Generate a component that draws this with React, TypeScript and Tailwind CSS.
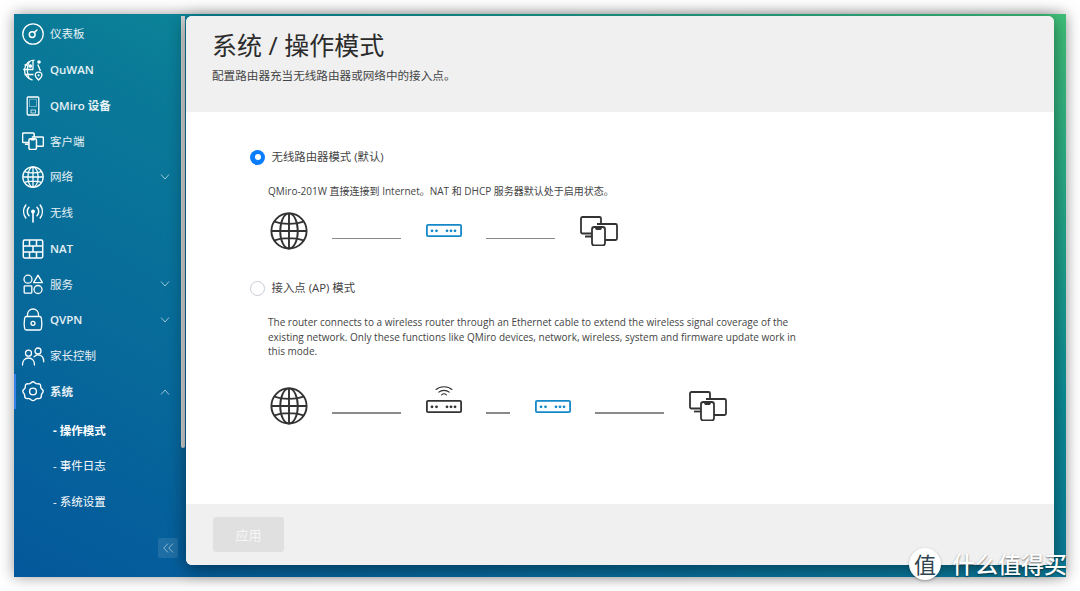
import React from "react";

const cjk = "font-['Open_Sans','Noto_Sans_CJK_SC',sans-serif]";

type IconProps = { className?: string };

const DashboardIcon = () => (
  <svg width="24" height="24" viewBox="0 0 24 24" fill="none" stroke="white" strokeWidth="1.3">
    <circle cx="12" cy="12" r="10.2" />
    <circle cx="11.2" cy="12.6" r="2.9" strokeWidth="1.5" />
    <path d="M13.4 10.4 16 8" strokeWidth="1.5" strokeLinecap="round" />
  </svg>
);

const QuwanIcon = () => (
  <svg width="24" height="24" viewBox="0 0 24 24" fill="none" stroke="white" strokeWidth="1.3">
    <path d="M13.5 2.2A10 10 0 0 0 11.5 22" />
    <path d="M8.5 3.2C5.6 8 5.6 16 8.5 21" />
    <path d="M2.2 11.5h10M3.5 7h3M3.5 16.5h9" />
    <path d="M12 2.4v9.1" />
    <circle cx="9.3" cy="8" r="1.2" fill="white" />
    <circle cx="18" cy="4" r="1.8" fill="white" stroke="none" />
    <path d="M16.8 6.5 19.5 13" />
    <path d="M17.6 14.2c-2 0-3.3 1.4-3.3 3 0 1.8 3.3 4.8 3.3 4.8s3.3-3 3.3-4.8c0-1.6-1.3-3-3.3-3Z" />
    <circle cx="17.6" cy="17.2" r="1" fill="white" stroke="none" />
  </svg>
);

const QmiroIcon = () => (
  <svg width="24" height="24" viewBox="0 0 24 24" fill="none" stroke="white" strokeWidth="1.3">
    <rect x="6.2" y="3" width="11.6" height="18" rx="1" />
    <path d="M8.5 5.2h7v7.3h-7z" strokeWidth="0.5" strokeOpacity="0.8" />
    <rect x="10" y="16" width="4.6" height="3" strokeWidth="0.7" />
  </svg>
);

const DevicesIcon = ({ className = "", color = "white", w = 1.8 }: IconProps & { color?: string; w?: number }) => (
  <svg className={className} viewBox="0 0 38 30" fill="none" stroke={color} strokeWidth={w} strokeLinejoin="round">
    <path d="M12 17.5H2.5A1.5 1.5 0 0 1 1 16V2.5A1.5 1.5 0 0 1 2.5 1h17A1.5 1.5 0 0 1 21 2.5V8" />
    <path d="M5 20.5h7" />
    <path d="M17 8h18.5A1.5 1.5 0 0 1 37 9.5v13a1.5 1.5 0 0 1-1.5 1.5H25" />
    <rect x="12" y="11" width="13" height="18.5" rx="2.4" />
    <path d="M15.5 11l1 2h4l1-2" />
  </svg>
);

const GlobeIcon = ({ className = "", color = "white", w = 1.9 }: IconProps & { color?: string; w?: number }) => (
  <svg className={className} viewBox="0 0 38 38" fill="none" stroke={color} strokeWidth={w}>
    <circle cx="19" cy="19" r="17.6" />
    <ellipse cx="19" cy="19" rx="8.8" ry="17.6" />
    <path d="M19 1.4v35.2M1.4 19h35.2M4.4 9.6c8 3 21 3 29.2 0M4.4 28.4c8-3 21-3 29.2 0" />
  </svg>
);

const WirelessIcon = () => (
  <svg width="24" height="24" viewBox="0 0 24 24" fill="none" stroke="white" strokeWidth="1.5" strokeLinecap="round">
    <path d="M12 11v10" strokeWidth="1.6" />
    <circle cx="12" cy="10.5" r="1.9" fill="white" stroke="none" />
    <path d="M8 6.3a6 6 0 0 0 0 8.4M16 6.3a6 6 0 0 1 0 8.4" />
    <path d="M4.8 4a11 11 0 0 0 0 13M19.2 4a11 11 0 0 1 0 13" />
  </svg>
);

const NatIcon = () => (
  <svg width="24" height="24" viewBox="0 0 24 24" fill="none" stroke="white" strokeWidth="1.5">
    <rect x="2.3" y="3" width="19.4" height="18" rx="1.4" />
    <path d="M2.3 9h19.4M2.3 15h19.4M8.5 3v6M15.5 3v6M12 9v6M8.5 15v6M15.5 15v6" />
  </svg>
);

const ServicesIcon = () => (
  <svg width="24" height="24" viewBox="0 0 24 24" fill="none" stroke="white" strokeWidth="1.3" strokeLinejoin="round">
    <circle cx="7" cy="7.2" r="4" />
    <path d="M17 3.2l4.4 7.4h-8.8z" />
    <rect x="3.2" y="13.8" width="7.6" height="7.4" rx="0.8" />
    <circle cx="17" cy="17.5" r="4" />
  </svg>
);

const LockIcon = () => (
  <svg width="24" height="24" viewBox="0 0 24 24" fill="none" stroke="white" strokeWidth="1.3">
    <path d="M6.5 8.5V6.5a5.5 5.5 0 0 1 11 0v2" />
    <path d="M5.5 8.5h13c1 0 1.7.9 1.9 1.8.5 3.2.5 7.2 0 10-.2.9-1 1.7-1.9 1.7h-13c-1 0-1.7-.8-1.9-1.7-.5-2.8-.5-6.8 0-10 .2-.9.9-1.8 1.9-1.8Z" />
    <circle cx="12" cy="15.3" r="2" />
  </svg>
);

const ParentalIcon = () => (
  <svg width="24" height="24" viewBox="0 0 24 24" fill="none" stroke="white" strokeWidth="1.3" strokeLinecap="round">
    <circle cx="7.5" cy="9.2" r="3" />
    <circle cx="17" cy="7" r="3" />
    <path d="M1.5 21c0-4 2.4-7 6-7s6 3 6 7" />
    <path d="M13 12.8c1-1.2 2.4-2 4-2 3.5 0 5.7 2.8 5.7 7" />
  </svg>
);

const GearIcon = () => (
  <svg width="24" height="24" viewBox="0 0 24 24" fill="none" stroke="white" strokeWidth="1.4" strokeLinejoin="round">
    <path d="M12 1.8c1.4 0 2 1.5 3.2 1.9 1.3.4 2.8-.3 3.8.6s.5 2.5 1 3.7c.5 1.2 2 1.8 2.2 3.1.1 1.3-1.3 2.1-1.7 3.3-.4 1.2.1 2.8-.9 3.7-1 .9-2.5.2-3.8.6-1.3.4-2.1 1.9-3.8 1.9s-2.5-1.5-3.8-1.9c-1.3-.4-2.8.3-3.8-.6-1-.9-.5-2.5-.9-3.7-.4-1.2-1.8-2-1.7-3.3.2-1.3 1.7-1.9 2.2-3.1.5-1.2 0-2.8 1-3.7s2.5-.2 3.8-.6C10 3.3 10.6 1.8 12 1.8Z" />
    <circle cx="12" cy="11.5" r="3.4" />
  </svg>
);

const Chevron = ({ up = false }: { up?: boolean }) => (
  <svg width="10" height="6" viewBox="0 0 10 6" fill="none" stroke="white" strokeOpacity="0.6" strokeWidth="1">
    <path d={up ? "M1 5.5 5 1l4 4.5" : "M1 .5 5 5l4-4.5"} />
  </svg>
);

const RouterBox = ({ color, className = "" }: { color: string; className?: string }) => (
  <svg className={className} width="36" height="13" viewBox="0 0 36 13" fill="none">
    <rect x="0.9" y="0.9" width="34.2" height="11.2" rx="1.2" stroke={color} strokeWidth="1.8" />
    <g fill={color}>
      <circle cx="6" cy="6.8" r="1.4" />
      <circle cx="10.5" cy="6.8" r="1.4" />
      <circle cx="21" cy="6.8" r="1.4" />
      <circle cx="25" cy="6.8" r="1.4" />
      <circle cx="29" cy="6.8" r="1.4" />
    </g>
  </svg>
);

const Line = ({ w }: { w: string }) => <div className={`${w} mb-[11px] h-[1.5px] bg-[#8a8a8a]`} />;

const Radio = ({ checked = false }: { checked?: boolean }) =>
  checked ? (
    <span className="flex h-[15px] w-[15px] items-center justify-center rounded-full bg-[#0a7dff]">
      <span className="h-[6px] w-[6px] rounded-full bg-white" />
    </span>
  ) : (
    <span className="h-[15px] w-[15px] rounded-full border border-[#c8ccd4] bg-white" />
  );

const navItems: { label: string; icon: React.ReactNode; bold?: boolean; chevron?: "up" | "down"; active?: boolean }[] = [
  { label: "仪表板", icon: <DashboardIcon /> },
  { label: "QuWAN", icon: <QuwanIcon />, bold: true },
  { label: "QMiro 设备", icon: <QmiroIcon />, bold: true },
  { label: "客户端", icon: <DevicesIcon className="h-[18px] w-[22px]" w={2.6} /> },
  { label: "网络", icon: <GlobeIcon className="h-[22px] w-[22px]" w={2.2} />, chevron: "down" },
  { label: "无线", icon: <WirelessIcon /> },
  { label: "NAT", icon: <NatIcon />, bold: true },
  { label: "服务", icon: <ServicesIcon />, chevron: "down" },
  { label: "QVPN", icon: <LockIcon />, bold: true, chevron: "down" },
  { label: "家长控制", icon: <ParentalIcon /> },
  { label: "系统", icon: <GearIcon />, bold: true, chevron: "up", active: true },
];

const subItems = [
  { label: "- 操作模式", bold: true },
  { label: "- 事件日志" },
  { label: "- 系统设置" },
];

export default function App() {
  return (
    <div className={`${cjk} relative h-[591px] w-[1080px] overflow-hidden bg-white p-[14px]`}>
      <div className="flex h-[563px] w-[1052px] bg-[linear-gradient(to_bottom_left,#3fbf78_0%,#0c8c95_34%,#0a7a98_50%,#04589c_100%)] shadow-[0_0_14px_rgba(0,0,0,0.4)]">
        <aside className="flex w-[167px] flex-col pt-[2.2px]">
          {navItems.map((item) => (
            <div
              key={item.label}
              className={`flex h-[35.75px] items-center border-l-[2px] pr-[11px] pl-[4px] ${
                item.active ? "border-[#3b82e6]" : "border-transparent"
              }`}
            >
              <div className="flex w-[26px] justify-center">{item.icon}</div>
              <span className={`ml-[4px] flex-1 text-[11.5px] text-white/90 ${item.bold ? "font-semibold text-white" : ""}`}>
                {item.label}
              </span>
              {item.chevron && <Chevron up={item.chevron === "up"} />}
            </div>
          ))}
          <div className="mt-[3px] flex flex-col">
            {subItems.map((item) => (
              <div
                key={item.label}
                className={`flex h-[35.75px] items-center pl-[39px] text-[11.5px] text-white ${item.bold ? "font-bold" : ""}`}
              >
                {item.label}
              </div>
            ))}
          </div>
          <div className="mt-auto mr-[3px] mb-[19px] flex h-[20px] w-[20px] items-center justify-center self-end rounded-[2px] bg-white/10 text-white/50">
            <svg width="11" height="10" viewBox="0 0 11 10" fill="none" stroke="currentColor" strokeWidth="1">
              <path d="M5 .5.8 5 5 9.5M10 .5 5.8 5 10 9.5" />
            </svg>
          </div>
        </aside>

        <div className="mt-[2px] h-[432px] w-[4px] rounded-b-[2px] bg-[#d4d4d4]" />

        <main className="mt-[2px] ml-px flex h-[549px] w-[868px] flex-col overflow-hidden rounded-[6px] bg-white shadow-[0_4px_18px_rgba(0,0,0,0.45)]">
          <header className="h-[96px] bg-[#f0f0f0] pt-[13px] pl-[26px]">
            <h1 className="text-[25px] leading-[32px] font-normal text-[#2b2b2b]">系统 / 操作模式</h1>
            <p className="mt-[7px] text-[11.6px] leading-[16px] text-[#444]">配置路由器充当无线路由器或网络中的接入点。</p>
          </header>

          <section className="flex-1 pt-[36px] pl-[64px] text-[#444]">
            <label className="flex h-[18px] items-center gap-[6.5px] text-[11.4px]">
              <Radio checked />
              无线路由器模式 (默认)
            </label>
            <p className="mt-[17px] ml-[18px] text-[10px] leading-[16px]">
              QMiro-201W 直接连接到 Internet。NAT 和 DHCP 服务器默认处于启用状态。
            </p>
            <div className="mt-[13px] ml-[19.5px] flex h-[38px] items-end gap-[24.5px]">
              <GlobeIcon className="h-[38px] w-[38px]" color="#333" />
              <Line w="w-[69px]" />
              <RouterBox color="#1588c8" className="mb-[13px]" />
              <Line w="w-[69px]" />
              <DevicesIcon className="mb-[4px] h-[30px] w-[38px]" color="#333" />
            </div>

            <label className="mt-[29px] flex h-[18px] items-center gap-[6.5px] text-[11.4px]">
              <Radio />
              接入点 (AP) 模式
            </label>
            <p className="mt-[18px] ml-[18px] w-[540px] text-[10px] leading-[14.6px]">
              The router connects to a wireless router through an Ethernet cable to extend the wireless signal coverage of the
              existing network. Only these functions like QMiro devices, network, wireless, system and firmware update work in
              this mode.
            </p>
            <div className="mt-[28.2px] ml-[19.5px] flex h-[38px] items-end gap-[24.5px]">
              <GlobeIcon className="h-[38px] w-[38px]" color="#333" />
              <Line w="w-[69px]" />
              <div className="mb-[12px] flex flex-col items-center">
                <svg width="18" height="14" viewBox="0 0 18 14" fill="none" stroke="#333" strokeWidth="1.1" strokeLinecap="round">
                  <path d="M1 4.5C5 .8 13 .8 17 4.5M3.8 7.2c2.8-2.4 7.6-2.4 10.4 0M6.6 9.8c1.4-1.2 3.4-1.2 4.8 0" />
                </svg>
                <RouterBox color="#333" className="mt-[1px]" />
              </div>
              <Line w="w-[24px]" />
              <RouterBox color="#1588c8" className="mb-[12px]" />
              <Line w="w-[69px]" />
              <DevicesIcon className="mb-[4px] h-[30px] w-[38px]" color="#333" />
            </div>
          </section>

          <footer className="flex h-[61px] items-center bg-[#f0f0f0] pl-[27px]">
            <button className="h-[35px] w-[71px] rounded-[3px] bg-[#e0e0e0] pt-[3px] text-[13px] text-[#f6f6f6]">应用</button>
          </footer>
        </main>
      </div>

      <div className="absolute top-[548px] left-[909px] flex items-center">
        <span className="flex h-[32px] w-[32px] items-center justify-center rounded-full bg-white text-[22px] leading-none text-[#2f4550] shadow-[0_1px_3px_rgba(0,0,0,0.3)]">
          值
        </span>
        <span className="ml-[11px] text-[23px] leading-[32px] font-medium whitespace-nowrap text-white [text-shadow:0_1px_2px_rgba(0,0,0,0.55)]">
          什么值得买
        </span>
      </div>
    </div>
  );
}
